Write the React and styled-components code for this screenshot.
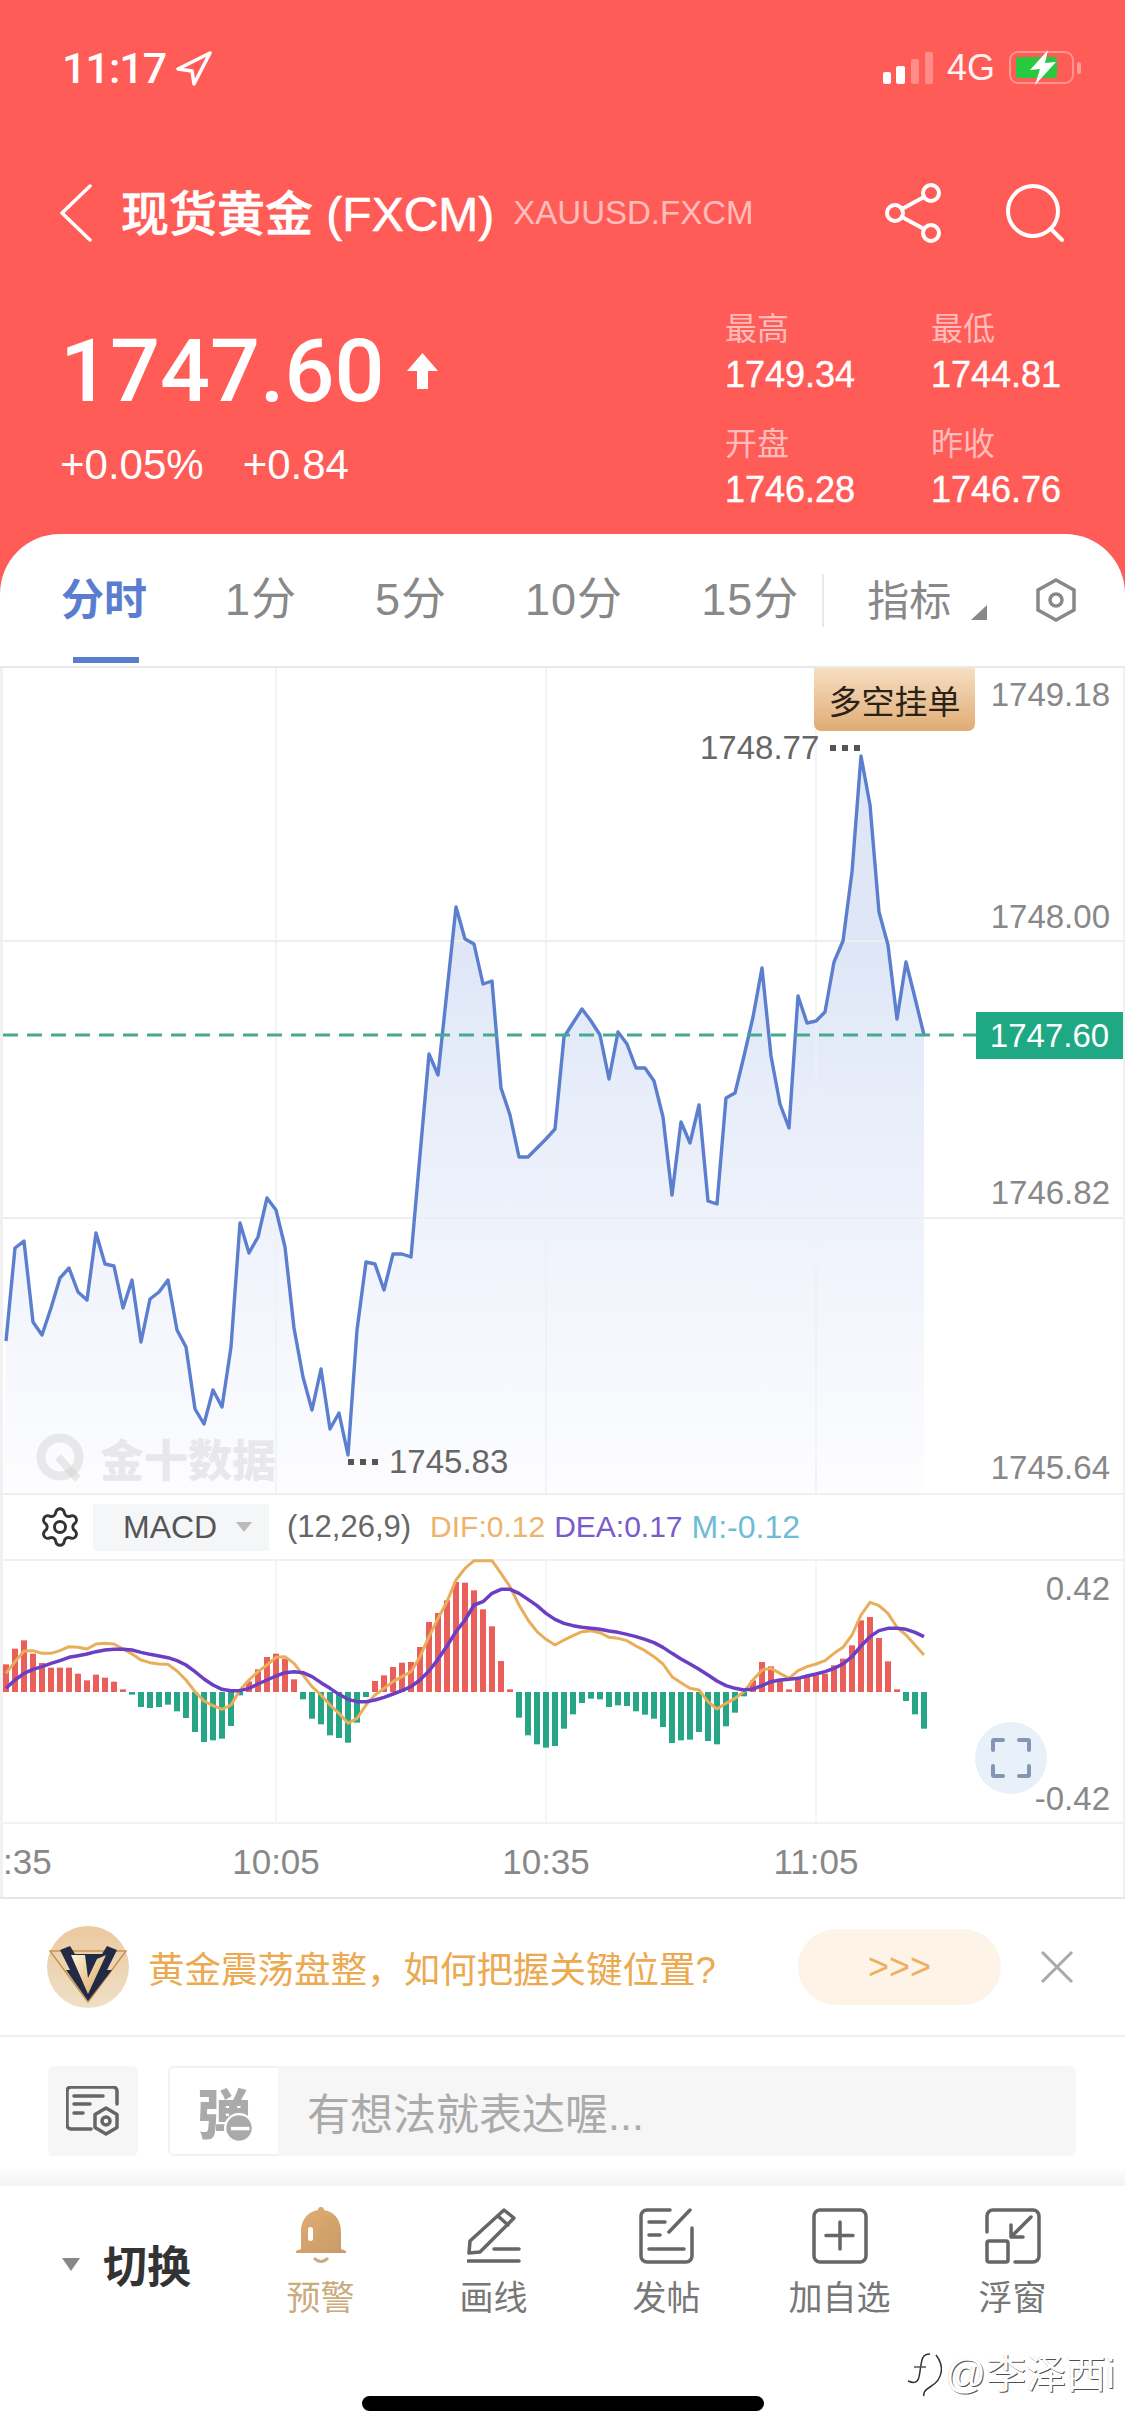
import React from "react";
import styled, { createGlobalStyle } from "styled-components";
import { Settings } from "lucide-react";

const SANS = `"Liberation Sans", "Noto Sans CJK SC", sans-serif`;
const MEDIUM = `Roboto, "Noto Sans CJK SC", sans-serif`;

// page y of every minute point, x = 6 + 9 * index
const PRICE = [
  1341, 1248, 1241, 1322, 1335, 1308, 1278, 1268, 1292, 1300, 1233, 1264, 1266, 1308, 1280, 1342, 1299, 1292, 1280, 1330,
  1347, 1409, 1424, 1390, 1407, 1347, 1223, 1253, 1237, 1198, 1210, 1247, 1328, 1377, 1410, 1369, 1429, 1413, 1455, 1330,
  1262, 1264, 1290, 1254, 1254, 1257, 1155, 1054, 1075, 991, 907, 939, 944, 984, 981, 1088, 1115, 1157, 1157, 1148,
  1139, 1129, 1037, 1023, 1009, 1021, 1035, 1079, 1032, 1044, 1068, 1068, 1081, 1117, 1195, 1122, 1143, 1105, 1201, 1204,
  1098, 1093, 1056, 1017, 968, 1056, 1104, 1128, 996, 1023, 1021, 1012, 962, 941, 872, 756, 805, 912, 945, 1019,
  962, 998, 1035,
];

// histogram values in thirds of a pixel, up is positive
const MACD = [
  83, 130, 155, 115, 87, 73, 73, 73, 55, 35, 52, 43, 31, 8, -8, -45, -48, -45, -38, -58,
  -78, -120, -150, -145, -140, -102, -10, 32, 68, 105, 115, 100, 38, -22, -80, -97, -130, -138, -152, -92,
  -15, 33, 50, 75, 88, 90, 135, 210, 237, 275, 330, 328, 305, 248, 197, 93, 8, -77, -130, -157,
  -167, -162, -110, -67, -33, -20, -22, -45, -40, -42, -58, -68, -80, -105, -153, -145, -143, -120, -147, -157,
  -103, -62, -13, 35, 90, 77, 35, 8, 40, 45, 50, 55, 80, 100, 140, 215, 225, 162, 92, 8,
  -27, -67, -110,
];

const DIF = [
  400, 365, 333, 332, 340, 340, 332, 320, 322, 327, 312, 310, 312, 327, 342, 360, 368, 372, 373, 393,
  420, 455, 483, 497, 508, 495, 450, 420, 395, 375, 352, 350, 370, 405, 440, 465, 495, 520, 550, 535,
  495, 465, 445, 425, 410, 395, 350, 290, 235, 185, 120, 85, 62, 62, 62, 100, 140, 195, 240, 275,
  298, 315, 300, 287, 275, 272, 278, 292, 295, 302, 318, 332, 350, 372, 410, 428, 445, 450, 485, 507,
  490, 475, 455, 420, 390, 385, 400, 415, 392, 380, 372, 362, 340, 322, 285, 225, 187, 197, 220, 262,
  285, 315, 345,
];

const DEA = [
  445, 420, 400, 388, 380, 370, 362, 352, 347, 342, 335, 330, 328, 328, 330, 337, 343, 348, 353, 362,
  375, 395, 417, 435, 448, 452, 452, 445, 432, 420, 408, 398, 395, 398, 410, 428, 445, 463, 478, 485,
  485, 480, 472, 462, 452, 440, 420, 393, 358, 318, 275, 240, 195, 185, 160, 148, 148, 160, 178, 197,
  220, 238, 250, 257, 262, 265, 268, 273, 277, 283, 290, 298, 308, 322, 340, 357, 372, 388, 405, 423,
  437, 445, 450, 447, 437, 425, 420, 418, 415, 408, 402, 395, 385, 372, 350, 318, 290, 272, 265, 265,
  268, 277, 290,
];

const MACD_ZERO = 1692;
const pointX = (i) => 6 + 9 * i;
const macdPoints = (list) => list.map((v, i) => `${pointX(i)},${1540 + v / 3}`).join(" ");
const pricePoints = PRICE.map((y, i) => `${pointX(i)},${y}`).join(" ");

const GlobalStyle = createGlobalStyle`
  html, body {
    margin: 0;
    padding: 0;
    background: #fff;
    font-family: ${SANS};
  }
  * {
    box-sizing: border-box;
  }
`;

const Page = styled.div`
  position: relative;
  width: 1125px;
  height: 2436px;
  overflow: hidden;
  background: #fff;
  display: flex;
  flex-direction: column;
`;

const Header = styled.header`
  height: 600px;
  background: #ff5b57;
  color: #fff;
  flex: none;
`;

const StatusBar = styled.div`
  height: 136px;
  padding: 0 43px 0 62px;
  display: flex;
  align-items: center;
`;

const Clock = styled.span`
  font-family: ${MEDIUM};
  font-size: 43px;
  font-weight: 500;
  letter-spacing: -1px;
`;

const StatusRight = styled.div`
  margin-left: auto;
  display: flex;
  align-items: center;
`;

const Network = styled.span`
  font-size: 36px;
  margin: 0 14px;
  opacity: 0.92;
`;

const NavRow = styled.div`
  height: 154px;
  padding: 0 61px 0 60px;
  display: flex;
  align-items: center;
`;

const Title = styled.h1`
  margin: 0 0 6px 29px;
  font-family: ${SANS};
  font-size: 48px;
  font-weight: 500;
  -webkit-text-stroke: 0.6px #fff;
  white-space: nowrap;
`;

const Code = styled.span`
  margin-left: 19px;
  font-size: 33px;
  color: rgba(255, 255, 255, 0.6);
`;

const NavIcons = styled.div`
  margin-left: auto;
  display: flex;
  align-items: center;
  gap: 60px;
`;

const QuoteRow = styled.div`
  padding: 19px 0 0 60px;
  display: flex;
`;

const QuoteMain = styled.div`
  width: 665px;
  flex: none;
  padding-top: 12px;
`;

const PriceLine = styled.div`
  height: 100px;
  display: flex;
  align-items: center;
  gap: 22px;
`;

const Price = styled.span`
  font-family: ${MEDIUM};
  font-size: 88px;
  font-weight: 500;
  line-height: 100px;
`;

const ChangeLine = styled.div`
  margin-top: 22px;
  display: flex;
  gap: 39px;
  font-size: 42px;
  line-height: 44px;
`;

const Stats = styled.div`
  display: grid;
  grid-template-columns: 206px 194px;
  row-gap: 29px;
`;

const StatLabel = styled.div`
  font-size: 32px;
  line-height: 40px;
  color: rgba(255, 255, 255, 0.6);
`;

const StatValue = styled.div`
  margin-top: 6px;
  font-size: 36px;
  line-height: 40px;
  -webkit-text-stroke: 0.4px #fff;
`;

const Panel = styled.main`
  position: relative;
  margin-top: -66px;
  flex: 1;
  background: #fff;
  border-radius: 60px 60px 0 0;
  display: flex;
  flex-direction: column;
`;

const Tabs = styled.nav`
  height: 134px;
  flex: none;
  padding: 0 49px 0 61px;
  display: flex;
  align-items: center;
  gap: 78px;
  border-bottom: 2px solid #e9e9e9;
`;

const Tab = styled.span`
  position: relative;
  font-size: ${(p) => (p.$active ? 43 : 45)}px;
  letter-spacing: ${(p) => (p.$active ? 0 : 1)}px;
  line-height: 132px;
  color: ${(p) => (p.$active ? "#5b7dcf" : "#888")};
  font-weight: ${(p) => (p.$active ? 700 : 400)};
  font-family: ${(p) => (p.$active ? MEDIUM : SANS)};

  ${(p) =>
    p.$active &&
    `
    &::after {
      content: '';
      position: absolute;
      left: 12px;
      right: 8px;
      bottom: 3px;
      height: 6px;
      background: #5b7dcf;
    }
  `}
`;

const TabTools = styled.div`
  margin-left: -55px;
  flex: 1;
  display: flex;
  align-items: center;
`;

const TabSeparator = styled.i`
  width: 2px;
  height: 53px;
  background: #e8e8e8;
`;

const IndicatorTab = styled.span`
  margin: 0 0 6px 43px;
  font-size: 42px;
  color: #888;
`;

const CornerCaret = styled.i`
  margin: 24px 0 0 20px;
  width: 0;
  height: 0;
  border-left: 16px solid transparent;
  border-bottom: 15px solid #888;
`;

const HexIcon = styled.svg`
  margin-left: auto;
`;

const ChartFrame = styled.section`
  flex: none;
  box-shadow: inset 3px 0 #f1f1f1, inset -2px 0 #f1f1f1;
  border-bottom: 2px solid #e6e6e6;
`;

const ChartCanvas = styled.div`
  position: relative;
  height: ${(p) => p.$height}px;
`;

const BlockSvg = styled.svg`
  display: block;
`;

const AxisLabel = styled.span`
  position: absolute;
  right: 15px;
  top: ${(p) => p.$top}px;
  font-size: 33px;
  line-height: 36px;
  color: #888;
`;

const OrderTag = styled.div`
  position: absolute;
  top: 0;
  right: 150px;
  width: 161px;
  height: 63px;
  display: flex;
  align-items: center;
  justify-content: center;
  font-size: 33px;
  color: #2a2118;
  border-radius: 0 0 7px 7px;
  background: linear-gradient(#f7dfc2, #dfac74);
`;

const ExtremeMark = styled.div`
  position: absolute;
  top: ${(p) => p.$top}px;
  left: ${(p) => p.$left}px;
  display: flex;
  align-items: center;
  gap: 11px;
  font-size: 33px;
  line-height: 36px;
  color: #666;
`;

const Dots = styled.span`
  display: flex;
  gap: 6px;

  i {
    width: 6px;
    height: 6px;
    background: #555;
  }
`;

const LastTag = styled.div`
  position: absolute;
  top: 344px;
  right: 2px;
  width: 147px;
  height: 47px;
  display: flex;
  align-items: center;
  justify-content: center;
  font-size: 33px;
  color: #fff;
  background: #1fa884;
`;

const Watermark = styled.div`
  position: absolute;
  top: 765px;
  left: 36px;
  display: flex;
  align-items: center;
  gap: 14px;
  font-family: "Noto Sans CJK SC", sans-serif;
  font-size: 44px;
  font-weight: 900;
  line-height: 50px;
  color: rgba(205, 205, 205, 0.42);
`;

const IndicatorBar = styled.div`
  height: 66px;
  padding: 0 0 0 38px;
  display: flex;
  align-items: center;
  border-top: 2px solid #efefef;
  white-space: nowrap;
`;

const MacdSelect = styled.div`
  width: 176px;
  height: 47px;
  margin-left: 11px;
  padding-left: 30px;
  display: flex;
  align-items: center;
  gap: 19px;
  font-size: 32px;
  color: #555;
  background: #f5f6f8;
`;

const SmallCaret = styled.i`
  width: 0;
  height: 0;
  border-left: 8px solid transparent;
  border-right: 8px solid transparent;
  border-top: 10px solid #bbb;
`;

const IndicatorValue = styled.span`
  margin-left: ${(p) => p.$gap}px;
  font-size: ${(p) => p.$size || 30}px;
  color: ${(p) => p.$color};
`;

const ExpandButton = styled.div`
  position: absolute;
  left: 975px;
  top: 163px;
  width: 72px;
  height: 72px;
  border-radius: 50%;
  background: #e8f0fa;
  display: flex;
  align-items: center;
  justify-content: center;
`;

const TimeAxis = styled.div`
  height: 75px;
  padding-top: 2px;
  display: grid;
  grid-template-columns: 141px repeat(3, 270px);
  align-items: center;
  font-size: 35px;
  color: #888;
  border-top: 2px solid #f1f1f1;
`;

const TimeCell = styled.span`
  text-align: ${(p) => (p.$clipped ? "left" : "center")};
  padding-left: ${(p) => (p.$clipped ? 3 : 0)}px;
`;

const Banner = styled.div`
  height: 138px;
  flex: none;
  padding: 0 51px 0 47px;
  display: flex;
  align-items: center;
  border-bottom: 2px solid #f0f0f0;
`;

const BannerText = styled.span`
  margin-left: 19px;
  font-size: 36.5px;
  color: #eba950;
  white-space: nowrap;
`;

const BannerButton = styled.div`
  margin-left: auto;
  width: 203px;
  height: 76px;
  border-radius: 38px;
  background: #fdf3e7;
  color: #eeb060;
  font-size: 36px;
  display: flex;
  align-items: center;
  justify-content: center;
`;

const CloseIcon = styled.svg`
  margin-left: 39px;
`;

const InputRow = styled.div`
  height: 129px;
  flex: none;
  padding: 29px 49px 0 48px;
  display: flex;
  gap: 30px;
`;

const DraftButton = styled.div`
  width: 90px;
  height: 90px;
  border-radius: 6px;
  background: #f6f6f7;
  display: flex;
  align-items: center;
  justify-content: center;
`;

const InputBox = styled.div`
  flex: 1;
  height: 90px;
  display: flex;
  border-radius: 6px;
  background: #f6f6f7;
  overflow: hidden;
`;

const BarrageToggle = styled.div`
  position: relative;
  width: 110px;
  background: #fff;
  border: 2px solid #f2f2f2;
  border-right: none;
  border-radius: 6px 0 0 6px;
  display: flex;
  align-items: center;
  justify-content: center;
  font-family: "Noto Sans CJK SC", sans-serif;
  font-size: 54px;
  font-weight: 900;
  color: #aaa;
`;

const BarrageBadge = styled.svg`
  position: absolute;
  left: 54px;
  top: 45px;
`;

const Placeholder = styled.span`
  margin-left: 29px;
  align-self: center;
  font-size: 43px;
  color: #aaa;
`;

const ShadowBand = styled.div`
  height: 20px;
  flex: none;
  background: linear-gradient(#fff, #f3f3f3);
`;

const BottomBar = styled.footer`
  height: 210px;
  flex: none;
  padding-top: 21px;
  display: flex;
  align-items: flex-start;
`;

const SwitchBlock = styled.div`
  width: 234px;
  height: 114px;
  padding-left: 62px;
  display: flex;
  align-items: center;
  gap: 23px;
  font-family: "Noto Sans CJK SC", sans-serif;
  font-size: 44px;
  font-weight: 700;
  color: #333;
`;

const SwitchCaret = styled.i`
  width: 0;
  height: 0;
  border-left: 9px solid transparent;
  border-right: 9px solid transparent;
  border-top: 13px solid #888;
`;

const ToolItem = styled.div`
  width: 173px;
  display: flex;
  flex-direction: column;
  align-items: center;
`;

const ToolIcon = styled.div`
  height: 58px;
  display: flex;
  align-items: center;
`;

const ToolLabel = styled.span`
  margin-top: 13px;
  font-size: 34px;
  line-height: 40px;
  color: ${(p) => (p.$accent ? "#c9ab7e" : "#777")};
`;

const HomeIndicator = styled.div`
  width: 402px;
  height: 15px;
  flex: none;
  margin: 0 auto;
  border-radius: 8px;
  background: #000;
`;

const ZhihuMark = styled.div`
  position: absolute;
  right: 10px;
  top: 2349px;
  display: flex;
  align-items: center;
  gap: 2px;
  font-size: 40px;
  line-height: 50px;
  color: #fff;
  text-shadow: 1px 1px 0 rgba(0, 0, 0, 0.7), -1px 0 0 rgba(0, 0, 0, 0.1);
`;

const Stroke = styled.svg`
  display: block;
  fill: none;
  stroke: ${(p) => p.$color || "#666"};
  stroke-width: ${(p) => p.$width || 3.5};
  stroke-linecap: round;
  stroke-linejoin: round;
`;

const LocationIcon = styled(Stroke)`
  margin-left: 10px;
`;

const stats = [
  ["最高", "1749.34"],
  ["最低", "1744.81"],
  ["开盘", "1746.28"],
  ["昨收", "1746.76"],
];

const Signal = () => (
  <svg width="50" height="32" viewBox="0 0 50 32">
    <rect x="0" y="20" width="8" height="12" rx="2" fill="#fff" />
    <rect x="13" y="14" width="9" height="18" rx="2" fill="#fff" />
    <rect x="28" y="7" width="8" height="25" rx="2" fill="#fff" opacity="0.3" />
    <rect x="42" y="0" width="8" height="32" rx="2" fill="#fff" opacity="0.3" />
  </svg>
);

const Battery = () => (
  <svg width="73" height="36" viewBox="0 0 73 36">
    <rect x="1" y="2" width="63" height="31" rx="8" fill="none" stroke="#fff" strokeOpacity="0.35" strokeWidth="2" />
    <rect x="7" y="7" width="41" height="21" rx="2" fill="#28c840" />
    <rect x="68" y="12" width="4" height="12" rx="2" fill="#fff" opacity="0.4" />
    <polygon points="39,0 21,20 31,19 26,35 47,12 36,13" fill="#fff" />
  </svg>
);

const PriceChart = () => (
  <ChartCanvas $height={825}>
    <BlockSvg width="1125" height="825" viewBox="0 668 1125 825">
      <defs>
        <linearGradient id="area" gradientUnits="userSpaceOnUse" x1="0" y1="950" x2="0" y2="1490">
          <stop offset="0" stopColor="#dfe7f7" />
          <stop offset="1" stopColor="#fdfdff" />
        </linearGradient>
      </defs>
      <polygon points={`3,1491 ${pricePoints} 924,1491`} fill="url(#area)" />
      {[276, 546, 816].map((x) => (
        <line key={x} x1={x} x2={x} y1="668" y2="1493" stroke="#eef0f3" strokeWidth="1.5" />
      ))}
      {[941, 1218].map((y) => (
        <line key={y} x1="3" x2="1123" y1={y} y2={y} stroke="#eeeeee" strokeWidth="2" />
      ))}
      <polyline points={pricePoints} fill="none" stroke="#5b7fce" strokeWidth="3.4" strokeLinejoin="round" />
      <line x1="3" x2="976" y1="1035" y2="1035" stroke="#47a98d" strokeWidth="3" strokeDasharray="15 9" />
    </BlockSvg>
    <OrderTag>多空挂单</OrderTag>
    <AxisLabel $top={9}>1749.18</AxisLabel>
    <AxisLabel $top={231}>1748.00</AxisLabel>
    <AxisLabel $top={507}>1746.82</AxisLabel>
    <AxisLabel $top={782}>1745.64</AxisLabel>
    <LastTag>1747.60</LastTag>
    <ExtremeMark $top={62} $left={700}>
      1748.77
      <Dots><i /><i /><i /></Dots>
    </ExtremeMark>
    <ExtremeMark $top={776} $left={348}>
      <Dots><i /><i /><i /></Dots>
      1745.83
    </ExtremeMark>
    <Watermark>
      <svg width="50" height="50" viewBox="0 0 50 50">
        <circle cx="24" cy="24" r="19" fill="none" stroke="rgba(205,205,205,0.42)" strokeWidth="9" />
        <path d="M22 24 L42 46" stroke="rgba(205,205,205,0.42)" strokeWidth="8" />
      </svg>
      金十数据
    </Watermark>
  </ChartCanvas>
);

const MacdChart = () => (
  <ChartCanvas $height={263}>
    <BlockSvg width="1125" height="263" viewBox="0 1559 1125 263">
      <line x1="3" x2="1123" y1="1560" y2="1560" stroke="#f1f1f1" strokeWidth="2" />
      {[276, 546, 816].map((x) => (
        <line key={x} x1={x} x2={x} y1="1559" y2="1822" stroke="#f1f2f4" strokeWidth="1.5" />
      ))}
      {MACD.map((v, i) => (
        <rect
          key={i}
          x={pointX(i) - 3}
          y={v > 0 ? MACD_ZERO - v / 3 : MACD_ZERO}
          width="6"
          height={Math.abs(v) / 3}
          fill={v > 0 ? "#ea5f59" : "#27a587"}
        />
      ))}
      <polyline points={macdPoints(DIF)} fill="none" stroke="#e8ae5a" strokeWidth="3" strokeLinejoin="round" />
      <polyline points={macdPoints(DEA)} fill="none" stroke="#6a3fc4" strokeWidth="3.5" strokeLinejoin="round" />
    </BlockSvg>
    <AxisLabel $top={12}>0.42</AxisLabel>
    <AxisLabel $top={222}>-0.42</AxisLabel>
    <ExpandButton>
      <Stroke $color="#8496b4" $width={4} width="40" height="40" viewBox="0 0 40 40">
        <path d="M2 12 V3 a1 1 0 0 1 1-1 H12 M28 2 H37 a1 1 0 0 1 1 1 V12 M38 28 V37 a1 1 0 0 1-1 1 H28 M12 38 H3 a1 1 0 0 1-1-1 V28" />
      </Stroke>
    </ExpandButton>
  </ChartCanvas>
);

const tools = [
  {
    label: "预警",
    accent: true,
    icon: (
      <svg width="52" height="58" viewBox="0 0 52 58">
        <defs>
          <linearGradient id="bell" x1="0" y1="0" x2="1" y2="1">
            <stop offset="0" stopColor="#e2ad70" />
            <stop offset="1" stopColor="#c69a69" />
          </linearGradient>
        </defs>
        <circle cx="26" cy="3" r="3" fill="#d9a86f" />
        <path d="M26 3 C13 3 6 13 6 25 V42 L1 44 V46 H51 V44 L46 42 V25 C46 13 39 3 26 3 Z" fill="url(#bell)" />
        <rect x="13" y="20" width="5" height="14" rx="2.5" fill="#fff" />
        <path d="M19 51 Q26 58 33 51" fill="none" stroke="#c9ab7e" strokeWidth="3" />
      </svg>
    ),
  },
  {
    label: "画线",
    icon: (
      <Stroke width="54" height="56" viewBox="0 0 54 56">
        <path d="M37 2 L47 10 L13 44 L2 45 L3 33 Z M31 8 L41 17" />
        <path d="M27 41 H52 M1 53 H52" />
      </Stroke>
    ),
  },
  {
    label: "发帖",
    icon: (
      <Stroke width="56" height="56" viewBox="0 0 56 56">
        <path d="M31 2 H8 a6 6 0 0 0-6 6 V48 a6 6 0 0 0 6 6 H47 a6 6 0 0 0 6-6 V20" />
        <path d="M30 24 L51 2 M10 14 H26 M10 27 H21 M10 41 H45" />
      </Stroke>
    ),
  },
  {
    label: "加自选",
    icon: (
      <Stroke width="56" height="56" viewBox="0 0 56 56">
        <rect x="2" y="2" width="52" height="52" rx="6" />
        <path d="M28 14 V41 M14 27.5 H41" />
      </Stroke>
    ),
  },
  {
    label: "浮窗",
    icon: (
      <Stroke width="56" height="56" viewBox="0 0 56 56">
        <path d="M2 24 V8 a6 6 0 0 1 6-6 H48 a6 6 0 0 1 6 6 V48 a6 6 0 0 1-6 6 H30" />
        <rect x="2" y="33" width="21" height="21" rx="2" />
        <path d="M46 9 L26 29 M26 17 V29 H38" />
      </Stroke>
    ),
  },
];

const App = () => (
  <Page>
    <GlobalStyle />
    <Header>
      <StatusBar>
        <Clock>11:17</Clock>
        <LocationIcon $color="#fff" $width={3.5} width="36" height="35" viewBox="0 0 36 35">
          <polygon points="34,2 2,18 16,20 18,33" />
        </LocationIcon>
        <StatusRight>
          <Signal />
          <Network>4G</Network>
          <Battery />
        </StatusRight>
      </StatusBar>

      <NavRow>
        <Stroke $color="#fff" $width={3.5} width="32" height="58" viewBox="0 0 32 58">
          <polyline points="30,2 2,29 30,56" />
        </Stroke>
        <Title>现货黄金 (FXCM)</Title>
        <Code>XAUUSD.FXCM</Code>
        <NavIcons>
          <Stroke $color="#fff" $width={4} width="60" height="60" viewBox="0 0 60 60">
            <circle cx="47" cy="10" r="8" />
            <circle cx="11" cy="30" r="8" />
            <circle cx="47" cy="50" r="8" />
            <path d="M40 14 L18 26 M18 34 L40 46" />
          </Stroke>
          <Stroke $color="#fff" $width={4} width="60" height="58" viewBox="0 0 60 58">
            <circle cx="29" cy="27" r="25" />
            <path d="M47 45 L58 56" />
          </Stroke>
        </NavIcons>
      </NavRow>

      <QuoteRow>
        <QuoteMain>
          <PriceLine>
            <Price>1747.60</Price>
            <svg width="31" height="36" viewBox="0 0 31 36">
              <polygon points="15.5,0 31,18 21,18 21,36 10,36 10,18 0,18" fill="#fff" />
            </svg>
          </PriceLine>
          <ChangeLine>
            <span>+0.05%</span>
            <span>+0.84</span>
          </ChangeLine>
        </QuoteMain>
        <Stats>
          {stats.map(([label, value]) => (
            <div key={label}>
              <StatLabel>{label}</StatLabel>
              <StatValue>{value}</StatValue>
            </div>
          ))}
        </Stats>
      </QuoteRow>
    </Header>

    <Panel>
      <Tabs>
        <Tab $active>分时</Tab>
        <Tab>1分</Tab>
        <Tab>5分</Tab>
        <Tab>10分</Tab>
        <Tab>15分</Tab>
        <TabTools>
          <TabSeparator />
          <IndicatorTab>指标</IndicatorTab>
          <CornerCaret />
          <HexIcon width="40" height="44" viewBox="0 0 40 44" fill="none" stroke="#888" strokeWidth="3.5">
            <polygon points="20,2 38,12 38,32 20,42 2,32 2,12" />
            <circle cx="20" cy="22" r="6" />
          </HexIcon>
        </TabTools>
      </Tabs>

      <ChartFrame>
        <PriceChart />
        <IndicatorBar>
          <Settings size={44} strokeWidth={1.6} color="#333" />
          <MacdSelect>
            MACD
            <SmallCaret />
          </MacdSelect>
          <IndicatorValue $gap={18} $size={31} $color="#666">(12,26,9)</IndicatorValue>
          <IndicatorValue $gap={19} $color="#eeb36c">DIF:0.12</IndicatorValue>
          <IndicatorValue $gap={9} $color="#7a5bc9">DEA:0.17</IndicatorValue>
          <IndicatorValue $gap={9} $size={32} $color="#6fbcd6">M:-0.12</IndicatorValue>
        </IndicatorBar>
        <MacdChart />
        <TimeAxis>
          <TimeCell $clipped>:35</TimeCell>
          <TimeCell>10:05</TimeCell>
          <TimeCell>10:35</TimeCell>
          <TimeCell>11:05</TimeCell>
        </TimeAxis>
      </ChartFrame>

      <Banner>
        <svg width="82" height="82" viewBox="0 0 82 82">
          <defs>
            <linearGradient id="avatar" x1="0" y1="0" x2="0" y2="1">
              <stop offset="0" stopColor="#ecc9a0" />
              <stop offset="1" stopColor="#efe0c6" />
            </linearGradient>
            <linearGradient id="vee" x1="0" y1="0" x2="1" y2="1">
              <stop offset="0" stopColor="#fff3d8" />
              <stop offset="1" stopColor="#d9a65e" />
            </linearGradient>
          </defs>
          <circle cx="41" cy="41" r="41" fill="url(#avatar)" />
          <polygon points="3,25 79,25 41,76" fill="none" stroke="#c9924f" strokeWidth="1.5" />
          <polygon points="13,24 23,20 28,28 55,28 60,20 70,24 60,44 65,44 41,75 19,44 23,44" fill="#232a45" />
          <polygon points="24,29 38,29 41,52 50,33 59,29 41,68" fill="url(#vee)" />
        </svg>
        <BannerText>黄金震荡盘整，如何把握关键位置?</BannerText>
        <BannerButton>&gt;&gt;&gt;</BannerButton>
        <CloseIcon width="34" height="32" viewBox="0 0 34 32" stroke="#aaa" strokeWidth="3">
          <path d="M2 1 L32 31 M32 1 L2 31" />
        </CloseIcon>
      </Banner>

      <InputRow>
        <DraftButton>
          <Stroke $width={3.5} width="55" height="50" viewBox="0 0 55 50">
            <path d="M25 43 H5 a4 4 0 0 1-4-4 V5 a4 4 0 0 1 4-4 H47 a4 4 0 0 1 4 4 V18" />
            <path d="M8 10 H37 M8 18 H24 M8 27 H17" />
            <polygon points="40,22 51,28.5 51,41.5 40,48 29,41.5 29,28.5" />
            <circle cx="40" cy="35" r="4" />
          </Stroke>
        </DraftButton>
        <InputBox>
          <BarrageToggle>
            弹
            <BarrageBadge width="30" height="30" viewBox="0 0 26 26">
              <circle cx="13" cy="13" r="13" fill="#fff" />
              <circle cx="13" cy="13" r="11" fill="#aaa" />
              <rect x="6" y="12" width="16" height="3" fill="#fff" />
            </BarrageBadge>
          </BarrageToggle>
          <Placeholder>有想法就表达喔...</Placeholder>
        </InputBox>
      </InputRow>
      <ShadowBand />

      <BottomBar>
        <SwitchBlock>
          <SwitchCaret />
          切换
        </SwitchBlock>
        {tools.map((tool) => (
          <ToolItem key={tool.label}>
            <ToolIcon>{tool.icon}</ToolIcon>
            <ToolLabel $accent={tool.accent}>{tool.label}</ToolLabel>
          </ToolItem>
        ))}
      </BottomBar>
      <HomeIndicator />
    </Panel>

    <ZhihuMark>
      <svg width="38" height="46" viewBox="0 0 38 46" fill="none" stroke="#333" strokeWidth="1.5">
        <path d="M24 3 C14 3 16 12 13 26 C11 33 7 32 2 30" />
        <path d="M8 16 H20" stroke="#555" />
        <path d="M30 4 C38 14 38 28 24 36 C19 39 17 42 18 45" />
      </svg>
      @李泽西i
    </ZhihuMark>
  </Page>
);

export default App;
